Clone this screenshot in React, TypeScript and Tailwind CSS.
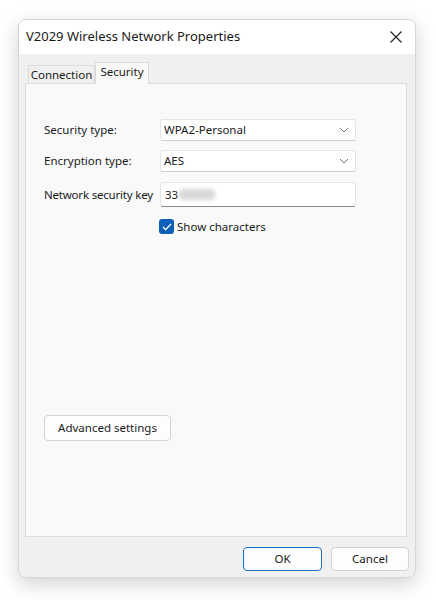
import React from 'react';

const font = { fontFamily: '"Noto Sans", "Open Sans", sans-serif' };

function Chevron() {
  return (
    <svg width="10" height="6" viewBox="0 0 10 6" className="text-[#7a7a7a]">
      <path d="M1 1l4 4 4-4" fill="none" stroke="currentColor" strokeWidth="1" />
    </svg>
  );
}

function Dropdown({ value }: { value: string }) {
  return (
    <div className="w-[196px] h-[22px] flex items-center justify-between pl-[3px] pr-[6px] bg-white border border-[#e5e5e5] border-b-[#d0d0d0] rounded-[3px] text-[11.5px] text-[#1a1a1a]">
      <span>{value}</span>
      <Chevron />
    </div>
  );
}

export default function App() {
  return (
    <div className="w-[436px] h-[600px] bg-white pt-[19px] pl-[18px]" style={font}>
      <div className="w-[398px] h-[559px] flex flex-col rounded-[8px] border border-[#d6d6d6] bg-[#f0f0f0] overflow-hidden shadow-[0_6px_20px_rgba(0,0,0,0.18)]">
        {/* title bar */}
        <div className="h-[34px] bg-white flex items-center justify-between pl-[7px] pr-[13px]">
          <span className="text-[13px] text-[#1b1b1b]">V2029 Wireless Network Properties</span>
          <svg width="12" height="12" viewBox="0 0 12 12">
            <path d="M0.5 0.5l11 11M11.5 0.5l-11 11" stroke="#222" strokeWidth="1.2" fill="none" />
          </svg>
        </div>

        <div className="flex-1 flex flex-col pl-[6px] pr-[8px] pt-[8px]">
          {/* tabs */}
          <div className="flex items-end h-[21px] pl-[3px] relative z-10">
            <div className="h-[18px] w-[67px] flex items-center justify-center text-[11.5px] text-[#1a1a1a] bg-[#f0f0f0] border border-b-0 border-[#dcdcdc]">
              Connection
            </div>
            <div className="h-[22px] w-[54px] pb-[3px] flex items-center justify-center text-[11.5px] text-[#1a1a1a] bg-[#f9f9f9] border border-b-0 border-[#dcdcdc] -mb-[1px]">
              Security
            </div>
          </div>

          {/* panel */}
          <div className="h-[454px] bg-[#f9f9f9] border border-[#dcdcdc] flex flex-col pl-[18px] pt-[35px]">
            <div className="flex flex-col gap-[9px]">
              <div className="flex items-center">
                <span className="w-[116px] whitespace-nowrap text-[11.5px] text-[#1a1a1a]">Security type:</span>
                <Dropdown value="WPA2-Personal" />
              </div>
              <div className="flex items-center">
                <span className="w-[116px] whitespace-nowrap text-[11.5px] text-[#1a1a1a]">Encryption type:</span>
                <Dropdown value="AES" />
              </div>
              <div className="flex items-center mt-[1px]">
                <span className="w-[116px] whitespace-nowrap text-[11.5px] text-[#1a1a1a] tracking-[-0.2px]">Network security key</span>
                <div className="w-[196px] h-[25px] flex items-center pl-[4px] bg-white border border-[#e5e5e5] border-b-[#8a8a8a] rounded-[3px] text-[11.5px] text-[#1a1a1a]">
                  <span>33</span>
                  <span className="ml-[1px] w-[36px] h-[11px] rounded-[4px] bg-[#d8d8d8] blur-[2px]" />
                </div>
              </div>
            </div>

            <div className="flex items-center ml-[115px] mt-[11px] gap-[3px]">
              <div className="w-[15px] h-[15px] rounded-[3px] bg-[#0f5fb8] flex items-center justify-center">
                <svg width="10" height="8" viewBox="0 0 10 8">
                  <path d="M1 4l2.6 2.6L9 1" fill="none" stroke="white" strokeWidth="1.3" />
                </svg>
              </div>
              <span className="text-[11.5px] text-[#1a1a1a]">Show characters</span>
            </div>

            <div className="mt-[179px]">
              <button className="w-[127px] h-[26px] bg-[#fdfdfd] border border-[#d3d3d3] rounded-[4px] text-[11.5px] text-[#1a1a1a]">
                Advanced settings
              </button>
            </div>
          </div>

          {/* footer buttons */}
          <div className="flex justify-end gap-[9px] mt-[10px] -mr-[2px]">
            <button className="w-[79px] h-[24px] bg-[#fdfdfd] border border-[#1e6fb8] rounded-[4px] text-[11.5px] text-[#1a1a1a]">
              OK
            </button>
            <button className="w-[78px] h-[24px] bg-[#fdfdfd] border border-[#d3d3d3] rounded-[4px] text-[11.5px] text-[#1a1a1a]">
              Cancel
            </button>
          </div>
        </div>
      </div>
    </div>
  );
}
